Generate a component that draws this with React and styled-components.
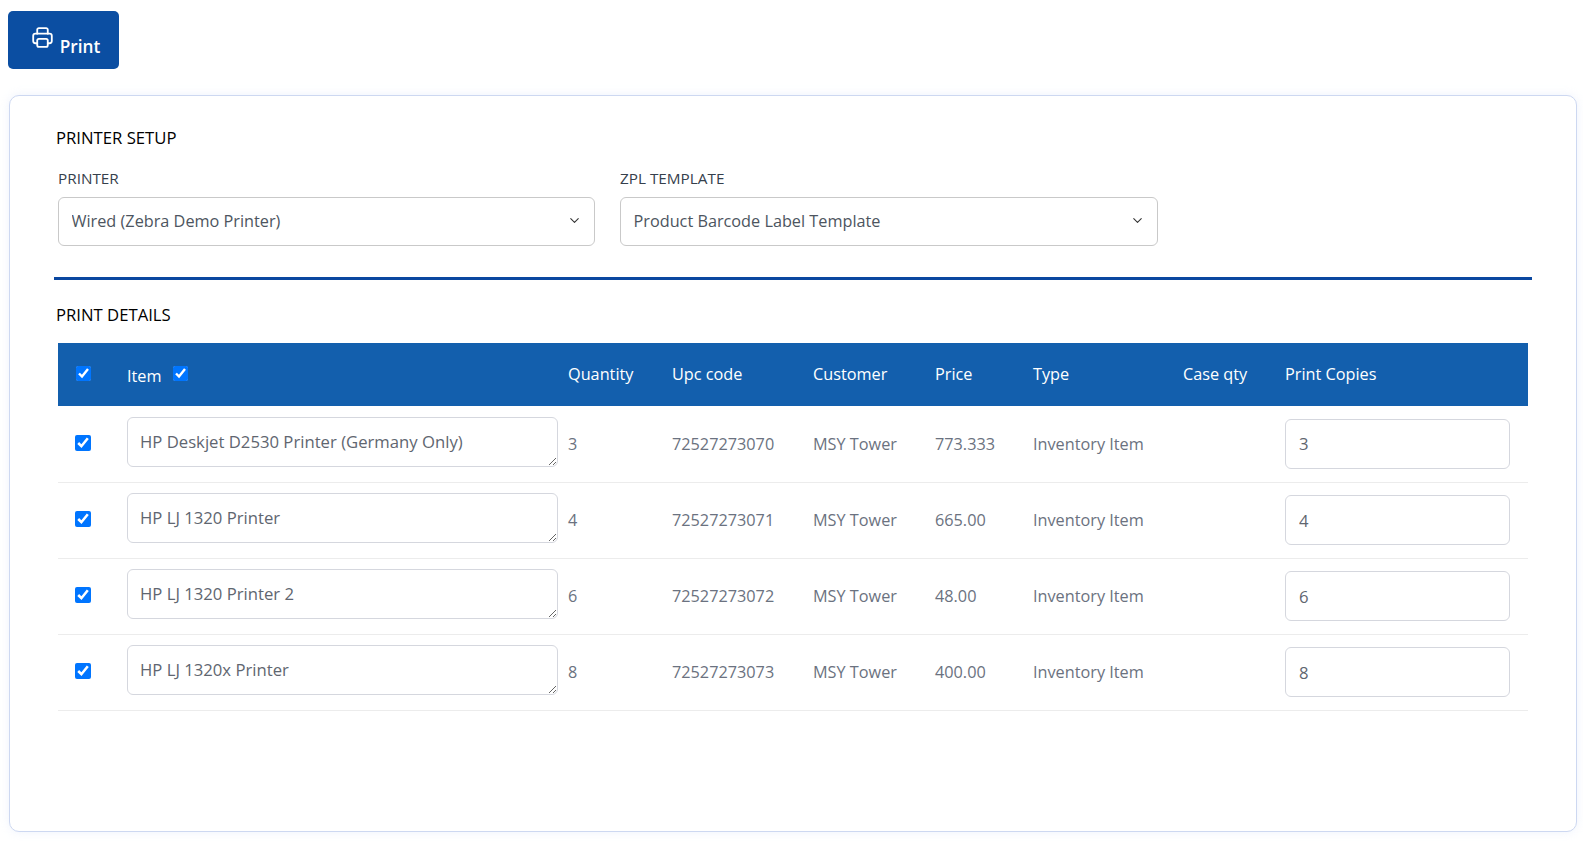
import React from "react";
import styled, { createGlobalStyle } from "styled-components";
import { ChevronDown } from "lucide-react";

const GlobalStyle = createGlobalStyle`
  html, body {
    margin: 0;
    padding: 0;
    background: #fff;
    font-family: "Open Sans", "Liberation Sans", sans-serif;
    font-size: 16px;
  }
  * { box-sizing: border-box; }
`;

const Page = styled.div`
  padding: 11px 6px 9px 8px;
`;

const PrintButton = styled.button`
  display: flex;
  align-items: center;
  justify-content: center;
  gap: 6px;
  width: 111px;
  height: 58px;
  padding: 0 0 0 4px;
  border: 0;
  border-radius: 5px;
  background: #0b4ea2;
  color: #fff;
  font: 600 17.2px "Open Sans", sans-serif;
  svg { margin-top: -5px; }
  span { margin-top: 12px; }
`;

const Card = styled.section`
  margin: 26px 0 0 1px;
  height: 737px;
  padding: 30px 45px 0 47px;
  background: #fff;
  border: 1px solid #cdd8f1;
  border-radius: 10px;
  box-shadow: 0 0 10px rgba(200, 212, 245, 0.3);
`;

const SectionTitle = styled.h2`
  margin: 0 0 0 -1px;
  font-size: 16.7px;
  line-height: 24px;
  font-weight: 400;
  color: #000;
`;

const SelectRow = styled.div`
  display: flex;
  gap: 25px;
  margin: 18px 0 0 1px;
`;

const Field = styled.div`
  width: 537px;
  &:last-child { width: 538px; }
`;

const FieldLabel = styled.label`
  display: block;
  height: 20px;
  margin-bottom: 9px;
  font-size: 15.3px;
  line-height: 20px;
  color: #36404c;
`;

const SelectBox = styled.div`
  position: relative;
  height: 49px;
  svg {
    position: absolute;
    right: 13px;
    top: 16px;
    color: #333;
    pointer-events: none;
  }
`;

const Select = styled.select`
  appearance: none;
  width: 100%;
  height: 100%;
  padding: 0 13px 2px 12.5px;
  background: #fff;
  border: 1px solid #c9c9c9;
  border-radius: 6px;
  font: 400 16.25px "Open Sans", sans-serif;
  color: #4d5560;
`;

const Rule = styled.hr`
  margin: 31px 0 0 -3px;
  width: 1478px;
  height: 3px;
  border: 0;
  background: #0a47a0;
`;

const DetailsTitle = styled(SectionTitle)`
  margin: 23px 0 16px -1px;
`;

const Table = styled.table`
  width: 1470px;
  margin-left: 1px;
  border-collapse: collapse;
  table-layout: fixed;
`;

const HeadRow = styled.tr`
  height: 63px;
  background: #135fad;
`;

const HeadCell = styled.th`
  padding: 0 0 2px 10px;
  font-size: 16.25px;
  font-weight: 400;
  text-align: left;
  color: #fff;
`;

const CheckHeadCell = styled(HeadCell)`
  padding-left: 18px;
`;

const ItemHeadLabel = styled.span`
  display: inline-flex;
  align-items: center;
  gap: 11px;
  transform: translateY(2px);
`;

const Row = styled.tr`
  height: 76px;
  border-bottom: 1px solid #ececec;
`;

const Cell = styled.td`
  padding: 0 0 0 10px;
  font-size: 16.25px;
  color: #6b7280;
`;

const CheckCell = styled(Cell)`
  padding-left: 17px;
`;

const Check = styled.input.attrs({ type: "checkbox", readOnly: true })`
  display: block;
  margin: 0;
  width: ${(p) => p.$size}px;
  height: ${(p) => p.$size}px;
  transform: translateY(${(p) => p.$shift}px);
`;

const NameArea = styled.textarea`
  display: block;
  width: 431px;
  height: 50px;
  padding: 12px 12px;
  background: #fff;
  border: 1px solid #d5d7de;
  border-radius: 6px;
  font: 400 16.7px/24px "Open Sans", sans-serif;
  color: #5f6670;
  transform: translateY(-2px);
`;

const CopiesInput = styled.input`
  display: block;
  width: 225px;
  height: 50px;
  padding: 0 13px;
  background: #fff;
  border: 1px solid #d5d7de;
  border-radius: 6px;
  font: 400 16.7px "Open Sans", sans-serif;
  color: #5f6670;
`;

const PrinterIcon = () => (
  <svg width="23" height="23" viewBox="0 0 24 24" fill="none" stroke="currentColor" strokeWidth="1.9" strokeLinejoin="round" strokeLinecap="round">
    <path d="M6.5 8V4a1.7 1.7 0 0 1 1.7-1.7h7.6A1.7 1.7 0 0 1 17.5 4v4" />
    <path d="M6.5 18H4.6a2.3 2.3 0 0 1-2.3-2.3v-5.4A2.3 2.3 0 0 1 4.6 8h14.8a2.3 2.3 0 0 1 2.3 2.3v5.4a2.3 2.3 0 0 1-2.3 2.3h-1.9" />
    <rect x="6.5" y="13.5" width="11" height="8.2" rx="1.7" />
  </svg>
);

const columns = [59, 441, 104, 141, 122, 98, 150, 102, 253];

const rows = [
  { name: "HP Deskjet D2530 Printer (Germany Only)", qty: "3", upc: "72527273070", price: "773.333" },
  { name: "HP LJ 1320 Printer", qty: "4", upc: "72527273071", price: "665.00" },
  { name: "HP LJ 1320 Printer 2", qty: "6", upc: "72527273072", price: "48.00" },
  { name: "HP LJ 1320x Printer", qty: "8", upc: "72527273073", price: "400.00" },
];

export default function App() {
  return (
    <Page>
      <GlobalStyle />
      <PrintButton>
        <PrinterIcon />
        <span>Print</span>
      </PrintButton>
      <Card>
        <SectionTitle>PRINTER SETUP</SectionTitle>
        <SelectRow>
          <Field>
            <FieldLabel>PRINTER</FieldLabel>
            <SelectBox>
              <Select defaultValue="wired">
                <option value="wired">Wired (Zebra Demo Printer)</option>
              </Select>
              <ChevronDown size={15} strokeWidth={1.7} />
            </SelectBox>
          </Field>
          <Field>
            <FieldLabel>ZPL TEMPLATE</FieldLabel>
            <SelectBox>
              <Select defaultValue="barcode">
                <option value="barcode">Product Barcode Label Template</option>
              </Select>
              <ChevronDown size={15} strokeWidth={1.7} />
            </SelectBox>
          </Field>
        </SelectRow>
        <Rule />
        <DetailsTitle>PRINT DETAILS</DetailsTitle>
        <Table>
          <colgroup>
            {columns.map((w, i) => (
              <col key={i} width={w} />
            ))}
          </colgroup>
          <thead>
            <HeadRow>
              <CheckHeadCell>
                <Check $size={15} $shift={0} defaultChecked />
              </CheckHeadCell>
              <HeadCell>
                <ItemHeadLabel>
                  Item <Check $size={15} $shift={-2} defaultChecked />
                </ItemHeadLabel>
              </HeadCell>
              <HeadCell>Quantity</HeadCell>
              <HeadCell>Upc code</HeadCell>
              <HeadCell>Customer</HeadCell>
              <HeadCell>Price</HeadCell>
              <HeadCell>Type</HeadCell>
              <HeadCell>Case qty</HeadCell>
              <HeadCell>Print Copies</HeadCell>
            </HeadRow>
          </thead>
          <tbody>
            {rows.map((r) => (
              <Row key={r.upc}>
                <CheckCell>
                  <Check $size={16} $shift={-1} defaultChecked />
                </CheckCell>
                <Cell>
                  <NameArea defaultValue={r.name} />
                </Cell>
                <Cell>{r.qty}</Cell>
                <Cell>{r.upc}</Cell>
                <Cell>MSY Tower</Cell>
                <Cell>{r.price}</Cell>
                <Cell>Inventory Item</Cell>
                <Cell />
                <Cell>
                  <CopiesInput defaultValue={r.qty} />
                </Cell>
              </Row>
            ))}
          </tbody>
        </Table>
      </Card>
    </Page>
  );
}
